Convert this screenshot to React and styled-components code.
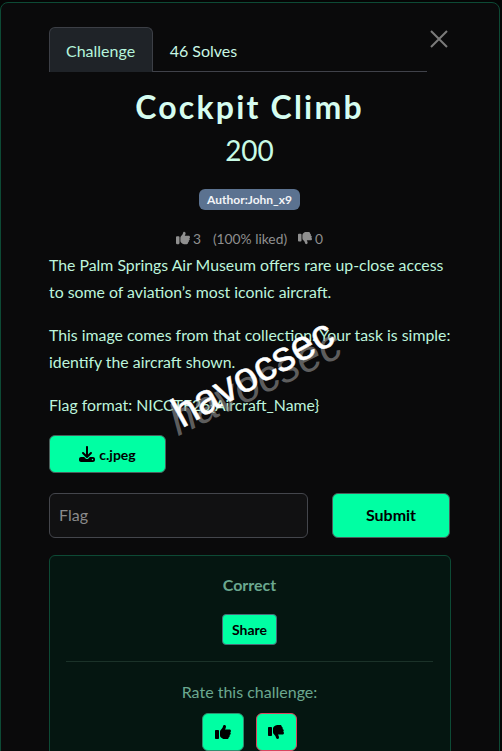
import styled, { createGlobalStyle } from "styled-components";
import { FaDownload, FaThumbsUp, FaThumbsDown } from "react-icons/fa6";

const Global = createGlobalStyle`
    html, body {
        margin: 0;
        height: 751px;
        overflow: hidden;
        background: #050505;
    }
    * {
        box-sizing: border-box;
    }
`;

export default function App() {
    return (
        <Page>
            <Global />
            <Modal>
                <CloseButton aria-label="Close">
                    <svg width="18" height="18" viewBox="0 0 18 18">
                        <path d="M1 1 L17 17 M17 1 L1 17" stroke="#7b7b7b" strokeWidth="2" fill="none" />
                    </svg>
                </CloseButton>

                <Tabs>
                    <Tab $active>Challenge</Tab>
                    <Tab>46 Solves</Tab>
                </Tabs>

                <Title>Cockpit Climb</Title>
                <Points>200</Points>
                <BadgeRow>
                    <Badge>Author:John_x9</Badge>
                </BadgeRow>

                <Likes>
                    <FaThumbsUp size={14} />
                    <LikeCount>3</LikeCount>
                    <LikePercent>(100% liked)</LikePercent>
                    <FaThumbsDown size={14} />
                    <LikeCount>0</LikeCount>
                </Likes>

                <Description>
                    <Para>The Palm Springs Air Museum offers rare up-close access to some of aviation’s most iconic aircraft.</Para>
                    <Para>This image comes from that collection. Your task is simple: identify the aircraft shown.</Para>
                    <Para>Flag format: NICCTF26{"{"}Aircraft_Name{"}"}</Para>
                    <WatermarkBack>havocsec</WatermarkBack>
                    <WatermarkFront>havocsec</WatermarkFront>
                </Description>

                <FileButton>
                    <FaDownload size={16} />
                    c.jpeg
                </FileButton>

                <FlagRow>
                    <FlagInput placeholder="Flag" />
                    <SubmitButton>Submit</SubmitButton>
                </FlagRow>

                <ResultCard>
                    <CorrectText>Correct</CorrectText>
                    <ShareButton>Share</ShareButton>
                    <Divider />
                    <RateText>Rate this challenge:</RateText>
                    <RateRow>
                        <RateButton><FaThumbsUp size={16} /></RateButton>
                        <RateButton $down><FaThumbsDown size={16} /></RateButton>
                    </RateRow>
                </ResultCard>
            </Modal>
        </Page>
    );
}

const Page = styled.div`
    height: 751px;
    overflow: hidden;
    padding: 2px 1px 0 0;
    font-family: "Lato", "Liberation Sans", sans-serif;
    color: #ccfbee;
`;

const Modal = styled.div`
    position: relative;
    width: 500px;
    min-height: 800px;
    padding: 24px 49px 16px 48px;
    background: #0a0a0b;
    border: 1px solid #0d4a35;
    border-radius: 8px;
`;

const CloseButton = styled.button`
    position: absolute;
    top: 27px;
    right: 51px;
    width: 18px;
    height: 18px;
    padding: 0;
    display: flex;
    background: none;
    border: none;
`;

const Tabs = styled.div`
    display: flex;
    width: 378px;
    height: 45px;
    border-bottom: 1px solid #40424a;
`;

const Tab = styled.div`
    height: 45px;
    padding: 1px 16.5px 0 16px;
    display: flex;
    align-items: center;
    font-size: 16px;
    color: ${(p) => (p.$active ? "#b5f5dc" : "#c8f7e4")};
    background: ${(p) => (p.$active ? "#1f2328" : "transparent")};
    border: 1px solid ${(p) => (p.$active ? "#3c3f46" : "transparent")};
    border-bottom: none;
    border-radius: 6px 6px 0 0;
`;

const Title = styled.h1`
    margin: 16px 0 0;
    text-align: center;
    font-size: 32px;
    line-height: 38px;
    font-weight: 700;
    letter-spacing: 2.2px;
    color: #d6fdf0;
`;

const Points = styled.div`
    margin-top: 7px;
    text-align: center;
    font-size: 28px;
    line-height: 34px;
    font-weight: 400;
    color: #c8fbe6;
`;

const BadgeRow = styled.div`
    margin-top: 22px;
    display: flex;
    justify-content: center;
`;

const Badge = styled.span`
    padding: 0 8px;
    height: 21px;
    display: flex;
    align-items: center;
    font-size: 12px;
    font-weight: 700;
    color: #f2f4f7;
    background: #5b7290;
    border-radius: 6px;
`;

const Likes = styled.div`
    margin-top: 16px;
    height: 24px;
    display: flex;
    justify-content: center;
    align-items: center;
    gap: 3px;
    font-size: 13.8px;
    color: #8f8f8f;
`;

const LikeCount = styled.span``;

const LikePercent = styled.span`
    margin: 0 8px 0 9px;
`;

const Description = styled.div`
    position: relative;
    margin: 0.75px -4px 0 0;
    font-size: 15.84px;
    line-height: 27.5px;
    color: #bdf5dc;
`;

const Para = styled.p`
    margin: 0 0 15px;
`;

const WatermarkFront = styled.div`
    position: absolute;
    left: 115px;
    top: 99px;
    font-family: "Liberation Sans", sans-serif;
    font-size: 42px;
    line-height: 46px;
    color: #ffffff;
    -webkit-text-stroke: 0.5px #ffffff;
    white-space: nowrap;
    transform: rotate(-29deg);
    pointer-events: none;
`;

const WatermarkBack = styled(WatermarkFront)`
    left: 113px;
    top: 106px;
    font-size: 44px;
    line-height: 50px;
    font-style: italic;
    color: rgba(150, 150, 150, 0.6);
    -webkit-text-stroke: 0;
    transform: rotate(-26deg);
`;

const FileButton = styled.button`
    width: 117px;
    height: 38px;
    margin-top: 17px;
    display: flex;
    justify-content: center;
    align-items: center;
    gap: 4px;
    font-family: inherit;
    font-size: 14px;
    font-weight: 700;
    color: #000;
    background: #00ffa3;
    border: 1px solid #4a5f5c;
    border-radius: 6px;
`;

const FlagRow = styled.div`
    margin-top: 20px;
    display: flex;
    justify-content: space-between;
`;

const FlagInput = styled.input`
    width: 259px;
    height: 45px;
    padding: 0 9px 2px;
    font-family: inherit;
    font-size: 16px;
    color: #ccfbee;
    background: #111112;
    border: 1px solid #44464c;
    border-radius: 6px;
    &::placeholder {
        color: #8a8a8a;
    }
`;

const SubmitButton = styled.button`
    width: 118px;
    height: 45px;
    padding: 0 0 2px;
    font-family: inherit;
    font-size: 16px;
    font-weight: 700;
    color: #000;
    background: #00ffa3;
    border: 1px solid #4a5f5c;
    border-radius: 6px;
`;

const ResultCard = styled.div`
    width: 402px;
    margin-top: 17px;
    padding: 19px 17px 16px 16px;
    display: flex;
    flex-direction: column;
    align-items: center;
    background: #051611;
    border: 1px solid #0d4a35;
    border-radius: 6px;
`;

const CorrectText = styled.div`
    font-size: 16px;
    line-height: 20px;
    font-weight: 700;
    color: #6ba88f;
`;

const ShareButton = styled.button`
    margin-top: 19px;
    width: 55px;
    height: 31px;
    padding: 0;
    font-family: inherit;
    font-size: 14px;
    font-weight: 700;
    color: #000;
    background: #00ffa3;
    border: 1px solid #4a6a78;
    border-radius: 4px;
`;

const Divider = styled.div`
    align-self: stretch;
    height: 1px;
    margin-top: 16px;
    background: #1b3229;
`;

const RateText = styled.div`
    margin-top: 20px;
    font-size: 16px;
    line-height: 20px;
    color: #6ba88f;
`;

const RateRow = styled.div`
    margin-top: 11px;
    display: flex;
    gap: 12px;
`;

const RateButton = styled.button`
    width: 41.5px;
    height: 38px;
    padding: 0;
    display: flex;
    justify-content: center;
    align-items: center;
    color: #000;
    background: #00ffa3;
    border: 1px solid ${(p) => (p.$down ? "#d9455f" : "#2f8f70")};
    border-radius: 6px;
`;
